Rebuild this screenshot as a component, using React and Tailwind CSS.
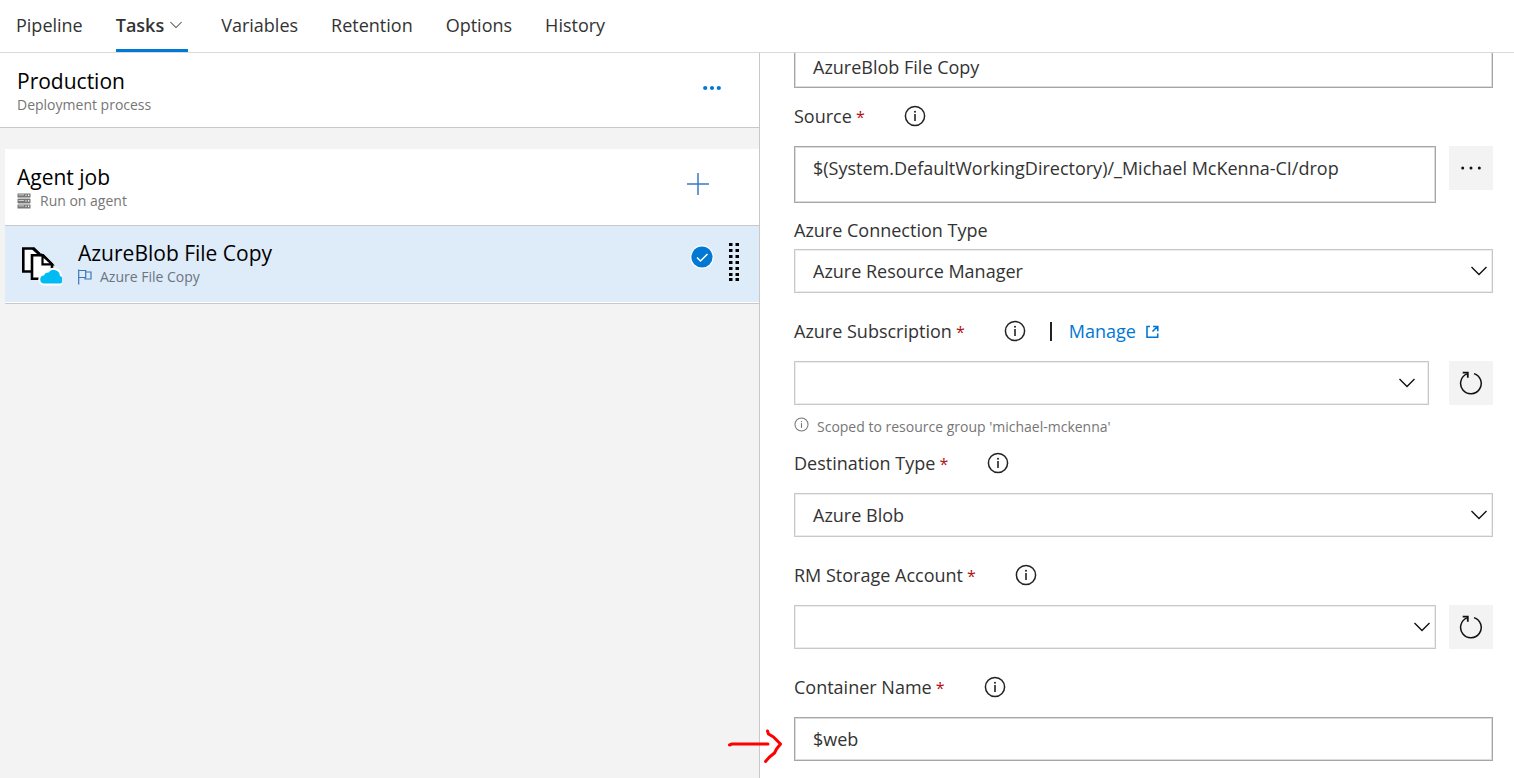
import React from "react";

function InfoIcon({ className }) {
  return (
    <svg viewBox="0 0 22 22" className={className} fill="none" aria-hidden="true">
      <circle cx="11" cy="11" r="9.6" stroke="currentColor" strokeWidth="1.5" />
      <path d="M11 9v7" stroke="currentColor" strokeWidth="1.6" />
      <circle cx="11" cy="6.7" r="1" fill="currentColor" />
    </svg>
  );
}

function Chevron({ className }) {
  return (
    <svg viewBox="0 0 16 10" className={className} fill="none" aria-hidden="true">
      <path d="M0.5 1 8 8.5 15.5 1" stroke="currentColor" strokeWidth="1.4" />
    </svg>
  );
}

function ServerIcon() {
  return (
    <svg viewBox="0 0 14 16" className="h-4 w-3.5" aria-hidden="true">
      {[0.5, 6, 11.5].map((y) => (
        <g key={y}>
          <rect x="0.5" y={y} width="13" height="4" fill="#767676" />
          <rect x="1.5" y={y + 1} width="5.5" height="0.8" fill="#e4e4e4" />
          <rect x="8.5" y={y + 1} width="1" height="1.6" fill="#f4f4f4" />
          <rect x="11" y={y + 1} width="1.2" height="1.6" fill="#f4f4f4" />
        </g>
      ))}
      <path d="M1 5.2h12M1 10.7h12" stroke="#a0a0a0" strokeWidth="0.8" />
    </svg>
  );
}

function FileCopyIcon() {
  return (
    <svg viewBox="0 0 42 42" className="h-[42px] w-[42px]" fill="none" aria-hidden="true">
      <path d="M3.3 4.5h10.500l5 5v18h-15.500z" fill="#fff" stroke="#000" strokeWidth="2.6" />
      <path d="M12 11.300h11l9 9v14.400h-20z" fill="#fff" stroke="#000" strokeWidth="2.600" />
      <path d="M13 4.500 21 11.500" stroke="#000" strokeWidth="2.800" />
      <path d="M22.500 11.500v8.800h9.500z" fill="#fff" stroke="#000" strokeWidth="2.200" />
      <path
        d="M24.500 39.500a4 4 0 0 1-.5-8 4.500 4.500 0 0 1 4.500-3 6.300 6.300 0 0 1 11.400 3.500 4 4 0 0 1 .6 7.500z"
        fill="#fff"
        stroke="#fff"
        strokeWidth="4"
      />
      <path
        d="M24.500 39.500a4 4 0 0 1-.5-8 4.500 4.500 0 0 1 4.500-3 6.300 6.300 0 0 1 11.400 3.500 4 4 0 0 1 .6 7.500z"
        fill="#00bcf2"
      />
    </svg>
  );
}

function FlagIcon() {
  return (
    <svg viewBox="0 0 14 16" className="h-4 w-3.5" fill="none" aria-hidden="true">
      <path d="M0.700 0.500v15M0.700 1.500h7v7h-7M7.700 3h5.300v7h-6v-1.500" stroke="#3b78b8" strokeWidth="1.200" />
    </svg>
  );
}

function RefreshIcon() {
  return (
    <svg viewBox="0 0 24 24" className="h-6 w-6" fill="none" aria-hidden="true">
      <path d="M15 2.600a10.300 10.300 0 1 1-7 .3" stroke="#111" strokeWidth="1.500" />
      <path d="M3.700 1.700h5.100v5" stroke="#111" strokeWidth="1.800" />
    </svg>
  );
}

function LabelRow({ id, text, required = true, info = true, className, children }) {
  return (
    <div className={`flex h-7 items-center ${className}`}>
      <label htmlFor={id} className="whitespace-nowrap">
        {text}
        {required && <span className="text-base leading-none text-[#b01010]"> *</span>}
      </label>
      {info && (
        <button type="button" aria-label={`About ${text}`} className="ml-[39px] text-[#222]">
          <InfoIcon className="h-[22px] w-[22px]" />
        </button>
      )}
      {children}
    </div>
  );
}

function SelectBox({ id, value, chevron = "right-1.5" }) {
  return (
    <div className="relative flex-1">
      <select
        id={id}
        defaultValue={value}
        className="block h-11 w-full appearance-none border border-[#c8c8c8] bg-white px-[18px] inset-shadow-[0_0_0_1px_#ececec] outline-none"
      >
        <option value={value}>{value}</option>
      </select>
      <Chevron className={`pointer-events-none absolute top-[17px] h-2.5 w-4 text-[#111] ${chevron}`} />
    </div>
  );
}

function SideButton({ label, children }) {
  return (
    <button
      type="button"
      aria-label={label}
      className="flex h-11 w-11 shrink-0 items-center justify-center bg-[#f3f3f3]"
    >
      {children}
    </button>
  );
}

function Tabs() {
  const tab = "flex h-[52px] items-center pb-0.5";
  return (
    <nav className="flex gap-[33px] border-b border-[#d9d9d9] px-4">
      <button type="button" className={tab}>Pipeline</button>
      <button
        type="button"
        aria-current="page"
        className="flex h-[52px] items-center gap-1.5 border-b-3 border-[#0078d4] pt-px pr-1.5 font-semibold"
      >
        Tasks
        <Chevron className="h-2 w-3 text-[#555]" />
      </button>
      <button type="button" className={tab}>Variables</button>
      <button type="button" className={tab}>Retention</button>
      <button type="button" className={tab}>Options</button>
      <button type="button" className={tab}>History</button>
    </nav>
  );
}

function ProcessPane() {
  return (
    <aside className="border-r border-[#c8c8c8] bg-[#f3f3f3] text-black">
      <header className="flex h-[75px] items-start justify-between border-b border-[#c8c8c8] bg-white pt-3.5 pr-[38px] pl-[17px]">
        <div>
          <h1 className="text-[21px] leading-7">Production</h1>
          <p className="text-sm leading-5 text-[#767676]">Deployment process</p>
        </div>
        <button type="button" aria-label="More actions" className="py-[18px]">
          <svg viewBox="0 0 18 6" className="h-1.5 w-[18px]" fill="#0078d4" aria-hidden="true">
            <circle cx="2.200" cy="3" r="2.100" />
            <circle cx="9" cy="3" r="2.100" />
            <circle cx="15.800" cy="3" r="2.100" />
          </svg>
        </button>
      </header>
      <section className="mt-[21px] ml-[5px]">
        <div className="flex h-[77px] items-start justify-between border-b border-[#c8c8c8] bg-white pt-3.5 pr-[50px] pl-3">
          <div>
            <h2 className="text-[21px] leading-7">Agent job</h2>
            <p className="flex items-center gap-[9px] text-sm leading-5 text-[#767676]">
              <ServerIcon />
              Run on agent
            </p>
          </div>
          <button type="button" aria-label="Add a task" className="py-2.5">
            <svg viewBox="0 0 22 22" className="h-[22px] w-[22px]" aria-hidden="true">
              <path d="M0 11h22M11 0v22" stroke="#3b78c4" strokeWidth="1.500" />
            </svg>
          </button>
        </div>
        <div className="border-b border-[#c8c8c8] bg-white pb-px">
          <div className="flex h-[76px] items-start bg-[#deebf9] pt-[13px] pr-5 pl-[15px]">
            <div className="pt-[5px]">
              <FileCopyIcon />
            </div>
            <div className="ml-4 flex-1">
              <h3 className="text-[21px] leading-7">AzureBlob File Copy</h3>
              <p className="flex items-center gap-2 text-sm leading-5 text-[#6b7480]">
                <FlagIcon />
                Azure File Copy
              </p>
            </div>
            <div className="pt-1.5">
              <svg viewBox="0 0 24 24" className="h-6 w-6" fill="none" role="img" aria-label="Selected">
                <circle cx="12" cy="12" r="11.800" fill="#fff" />
                <circle cx="12" cy="12" r="10.600" fill="#0078d4" />
                <path d="M7 12.500 10.500 16 17.500 9" stroke="#fff" strokeWidth="1.500" />
              </svg>
            </div>
            <div className="ml-[15px] pt-[3px]">
              <svg viewBox="0 0 10 40" className="h-10 w-2.5" fill="#000" aria-hidden="true">
                {[1, 7, 13, 19, 25, 31, 36].map((y) => (
                  <g key={y}>
                    <rect x="0" y={y} width="3.500" height="3" />
                    <rect x="6.500" y={y} width="3.500" height="3" />
                  </g>
                ))}
              </svg>
            </div>
          </div>
        </div>
      </section>
    </aside>
  );
}

function TaskForm() {
  return (
    <form className="pr-[21px] pb-4 pl-[34px]">
      <input
        aria-label="Display name"
        defaultValue="AzureBlob File Copy"
        className="block h-[35px] w-full border border-t-0 border-[#a6a6a6] px-[18px] pb-1.5 shadow-[inset_-1px_-1px_0_#dcdcdc,inset_1px_0_0_#dcdcdc] outline-none"
      />

      <LabelRow id="source" text="Source" className="mt-3.5 mb-4" />
      <div className="flex gap-[13px]">
        <textarea
          id="source"
          rows={1}
          defaultValue="$(System.DefaultWorkingDirectory)/_Michael McKenna-CI/drop"
          className="block h-[57px] min-w-0 flex-1 resize-none overflow-hidden border border-[#a6a6a6] px-[18px] py-[9px] inset-shadow-[0_0_0_1px_#dcdcdc] outline-none"
        />
        <SideButton label="Browse source">
          <svg viewBox="0 0 20 4" className="h-1 w-5" fill="#111" aria-hidden="true">
            <circle cx="1.700" cy="2" r="1.500" />
            <circle cx="10" cy="2" r="1.500" />
            <circle cx="18.300" cy="2" r="1.500" />
          </svg>
        </SideButton>
      </div>

      <LabelRow id="connection" text="Azure Connection Type" required={false} info={false} className="mt-[13px] mb-[5px]" />
      <div className="flex">
        <SelectBox id="connection" value="Azure Resource Manager" />
      </div>

      <LabelRow id="subscription" text="Azure Subscription" className="mt-6 mb-4">
        <span className="ml-6 h-[19px] w-0.5 bg-[#222]" />
        <a href="#manage" className="ml-[17px] flex items-center gap-2.5 text-[#0078d4]">
          Manage
          <svg viewBox="0 0 13 13" className="h-[13px] w-[13px]" fill="none" stroke="currentColor" strokeWidth="1.600" aria-hidden="true">
            <path d="M4 1.500H1v10.700h10.700V8.500M7 1.500h4.800v4.800M11.500 1.500 6.500 6.500" />
          </svg>
        </a>
      </LabelRow>
      <div className="flex gap-5">
        <SelectBox id="subscription" value="" chevron="right-3.5" />
        <SideButton label="Refresh subscriptions">
          <RefreshIcon />
        </SideButton>
      </div>
      <p className="mt-3 flex gap-2 text-sm leading-5 text-[#767676]">
        <InfoIcon className="h-[15px] w-[15px]" />
        Scoped to resource group 'michael-mckenna'
      </p>

      <LabelRow id="destination" text="Destination Type" className="mt-3 mb-4" />
      <div className="flex">
        <SelectBox id="destination" value="Azure Blob" />
      </div>

      <LabelRow id="storage" text="RM Storage Account" className="mt-6 mb-4" />
      <div className="flex gap-[13px]">
        <SelectBox id="storage" value="" />
        <SideButton label="Refresh storage accounts">
          <RefreshIcon />
        </SideButton>
      </div>

      <LabelRow id="container" text="Container Name" className="mt-6 mb-4" />
      <div className="relative">
        <input
          id="container"
          defaultValue="$web"
          className="block h-11 w-full border border-[#a6a6a6] px-[18px] inset-shadow-[0_0_0_1px_#dcdcdc] outline-none"
        />
        <svg
          viewBox="0 0 56 36"
          className="pointer-events-none absolute top-[11px] -left-[67px] h-9 w-14"
          fill="none"
          stroke="#f00"
          strokeWidth="3"
          strokeLinecap="round"
          strokeLinejoin="round"
          aria-hidden="true"
        >
          <path d="M2.500 17 5 16H41M40.500 3l1 3 5 3 7 7-4 5-2 4-5 4-4 4.500" />
        </svg>
      </div>
    </form>
  );
}

export default function App() {
  return (
    <div className="flex min-h-screen flex-col bg-white font-['Open_Sans','Noto_Sans',sans-serif] text-lg leading-6 text-[#333]">
      <Tabs />
      <main className="grid flex-1 grid-cols-[760fr_754fr]">
        <ProcessPane />
        <TaskForm />
      </main>
    </div>
  );
}
